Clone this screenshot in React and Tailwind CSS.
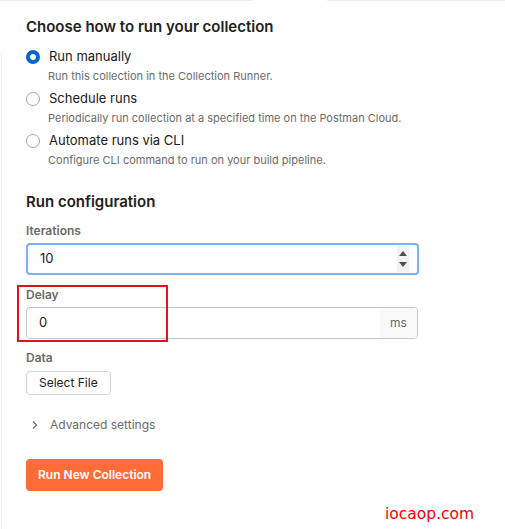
import React from "react";

function Radio({ checked, label, desc }) {
  return (
    <div className="flex flex-col">
      <div className="flex items-center h-[20px]">
        <span
          className={
            checked
              ? "w-[14px] h-[14px] rounded-full border-[4px] border-[#0265d2] bg-white"
              : "w-[14px] h-[14px] rounded-full border border-[#a6a6a6] bg-white"
          }
        />
        <span className="ml-[9px] text-[13px] text-[#212121]">{label}</span>
      </div>
      <div className="ml-[22px] text-[11px] text-[#6b6b6b] leading-[16px] mt-[1px]">{desc}</div>
    </div>
  );
}

export default function App() {
  return (
    <div
      className="relative w-[505px] h-[529px] bg-white overflow-hidden"
      style={{ fontFamily: "Inter, 'Noto Sans', sans-serif" }}
    >
      <div className="flex h-px">
        <div className="w-[252px] bg-[#ededed]" />
        <div className="w-[75px]" />
        <div className="flex-1 bg-[#ededed]" />
      </div>
      <div className="absolute left-[1px] top-[53px] bottom-0 w-px bg-[#ededed]" />

      <div className="pl-[26px] pt-[16px]">
        <div className="text-[15px] font-semibold text-[#212121] leading-[20px]">
          Choose how to run your collection
        </div>
        <div className="mt-[10px] flex flex-col gap-[5px]">
          <Radio checked label="Run manually" desc="Run this collection in the Collection Runner." />
          <Radio label="Schedule runs" desc="Periodically run collection at a specified time on the Postman Cloud." />
          <Radio label="Automate runs via CLI" desc="Configure CLI command to run on your build pipeline." />
        </div>

        <div className="mt-[24px] text-[15px] font-semibold text-[#212121] leading-[20px]">
          Run configuration
        </div>

        <div className="mt-[11px] text-[12px] font-semibold text-[#6b6b6b] leading-[16px]">Iterations</div>
        <div className="mt-[4px] w-[393px] h-[32px] rounded-[4px] border-2 border-[#7cb0f3] flex items-center justify-between">
          <span className="pl-[12px] text-[13px] text-[#212121]">10</span>
          <div className="w-[12px] h-[26px] mr-[8px] bg-[#f2f2f2] flex flex-col items-center justify-center gap-[6px]">
            <svg width="8" height="5" viewBox="0 0 8 5"><path d="M0 5 L4 0 L8 5 Z" fill="#505050" /></svg>
            <svg width="8" height="5" viewBox="0 0 8 5"><path d="M0 0 L4 5 L8 0 Z" fill="#505050" /></svg>
          </div>
        </div>

        <div className="mt-[12px] text-[12px] font-semibold text-[#6b6b6b] leading-[16px]">Delay</div>
        <div className="mt-[4px] w-[392px] h-[32px] rounded-[4px] border border-[#c7c7c7] flex items-stretch overflow-hidden">
          <span className="flex-1 pl-[12px] flex items-center text-[13px] text-[#212121]">0</span>
          <span className="w-[37px] bg-[#f9f9f9] flex items-center justify-center text-[12px] text-[#6b6b6b]">ms</span>
        </div>

        <div className="mt-[11px] text-[12px] font-semibold text-[#6b6b6b] leading-[16px]">Data</div>
        <button className="mt-[5px] h-[24px] px-[12px] rounded-[4px] border border-[#d4d4d4] bg-white text-[12px] text-[#212121]">
          Select File
        </button>

        <div className="mt-[22px] flex items-center h-[16px]">
          <svg width="16" height="16" viewBox="0 0 16 16" className="ml-[1px]">
            <path d="M6 4.5 L9.5 8 L6 11.5" fill="none" stroke="#6b6b6b" strokeWidth="1.2" />
          </svg>
          <span className="ml-[7px] text-[12px] text-[#6b6b6b]">Advanced settings</span>
        </div>

        <button className="mt-[26px] h-[32px] px-[12px] rounded-[4px] bg-[#ff6c37] text-white text-[12px] font-semibold">
          Run New Collection
        </button>
      </div>

      <div className="absolute left-[17px] top-[285px] w-[151px] h-[57px] border-2 border-[#e3131b]" />

      <div
        className="absolute left-[385px] top-[504px] text-[15.5px] text-[#ff0000] leading-[20px]"
        style={{ fontFamily: "'DejaVu Sans', sans-serif" }}
      >
        iocaop.com
      </div>
    </div>
  );
}
